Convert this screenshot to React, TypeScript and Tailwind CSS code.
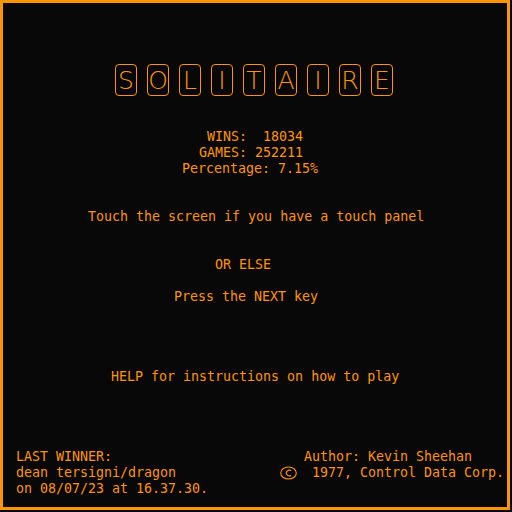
const letters = ["S", "O", "L", "I", "T", "A", "I", "R", "E"];

function Copyright() {
  return (
    <svg width="17" height="16" viewBox="0 0 17 16" className="inline-block align-top">
      <ellipse cx="8.5" cy="8" rx="7.8" ry="6" fill="none" stroke="#ff9500" strokeWidth="1.1" />
      <path d="M11.2 5.6 A3.2 2.8 0 1 0 11.2 10.4" fill="none" stroke="#ff9500" strokeWidth="1.1" />
    </svg>
  );
}

export default function App() {
  return (
    <div className="w-[512px] h-[512px] bg-[#080808] font-['DejaVu_Sans_Mono',monospace] text-[13.3px] text-[#ff9500]">
      <div className="w-[510px] h-[510px] border-[3px] border-[#ff9500] flex flex-col">
        <div className="mt-[61px] pl-[112px] flex gap-[10px]">
          {letters.map((l, i) => (
            <div
              key={i}
              className="w-[22px] h-[32px] border border-[#ff9500] rounded-[4px] flex items-center justify-center font-['DejaVu_Sans','Inter',sans-serif] font-extralight text-[25px] leading-none"
            >
              {l}
            </div>
          ))}
        </div>

        <div className="mt-[33px] leading-[16px] whitespace-pre">
          <div className="h-[16px] pl-[204px]">WINS:  18034</div>
          <div className="h-[16px] pl-[196px]">GAMES: 252211</div>
          <div className="h-[16px] pl-[179px]">Percentage: 7.15%</div>
        </div>

        <div className="mt-[32px] h-[16px] leading-[16px] pl-[85px] whitespace-pre">
          Touch the screen if you have a touch panel
        </div>
        <div className="mt-[32px] h-[16px] leading-[16px] pl-[212px] whitespace-pre">OR ELSE</div>
        <div className="mt-[16px] h-[16px] leading-[16px] pl-[171px] whitespace-pre">Press the NEXT key</div>
        <div className="mt-[64px] h-[16px] leading-[16px] pl-[108px] whitespace-pre">
          HELP for instructions on how to play
        </div>

        <div className="mt-[64px] flex leading-[16px] whitespace-pre">
          <div className="w-[277px] pl-[13px]">
            <div className="h-[16px]">LAST WINNER:</div>
            <div className="h-[16px]">dean tersigni/dragon</div>
            <div className="h-[16px]">on 08/07/23 at 16.37.30.</div>
          </div>
          <div>
            <div className="h-[16px] pl-[24px]">Author: Kevin Sheehan</div>
            <div className="h-[16px] flex">
              <Copyright />
              <span className="pl-[15px]">1977, Control Data Corp.</span>
            </div>
          </div>
        </div>
      </div>
    </div>
  );
}
